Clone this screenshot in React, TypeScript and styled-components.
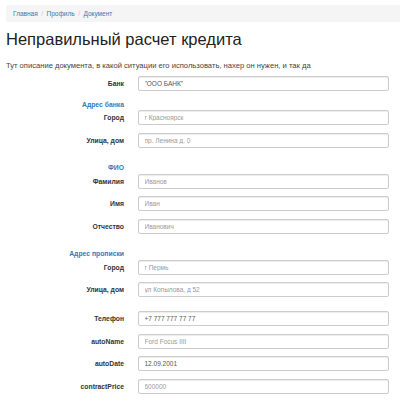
import React from "react";
import styled, { createGlobalStyle } from "styled-components";

const Global = createGlobalStyle`
  html, body { margin: 0; padding: 0; background: #fff; }
  body {
    font-family: "Liberation Sans", Arial, sans-serif;
    font-size: 7px;
    color: #333;
    overflow: hidden;
  }
`;

const Page = styled.div`
  padding: 5px 0 0 6px;
  width: 394px;
`;

const Breadcrumb = styled.ol`
  list-style: none;
  margin: 0;
  padding: 0 0 0 7px;
  height: 17px;
  display: flex;
  align-items: center;
  background: #f5f5f5;
  border-radius: 2px 0 0 2px;
  font-size: 6.5px;
`;

const Crumb = styled.li`
  color: #337ab7;
  & + &::before {
    content: "/";
    color: #ccc;
    padding: 0 3.5px;
  }
`;

const Title = styled.h1`
  margin: 8px 0 0;
  font-size: 16.5px;
  font-weight: normal;
  line-height: 18.7px;
  color: #222;
`;

const Lead = styled.p`
  margin: 12px 0 0;
  font-size: 7.6px;
  line-height: 9px;
  color: #444;
`;

const Form = styled.div`
  margin-top: 6px;
  display: flex;
  flex-direction: column;
`;

const Section = styled.div<{ $spaced?: boolean }>`
  display: flex;
  flex-direction: column;
  margin-bottom: ${(p) => (p.$spaced ? "6.5px" : "0")};
`;

const Heading = styled.div`
  display: grid;
  grid-template-columns: 118px;
  height: 12px;
  align-items: center;
  justify-items: end;
  color: #337ab7;
  font-weight: bold;
  font-size: 6.8px;
`;

const Row = styled.div`
  display: grid;
  grid-template-columns: 118px 251px;
  column-gap: 14px;
  align-items: center;
  margin-bottom: 7.5px;
`;

const Label = styled.label`
  text-align: right;
  font-weight: bold;
  font-size: 6.8px;
  color: #333;
`;

const Input = styled.input<{ $muted?: boolean }>`
  box-sizing: border-box;
  height: 15px;
  width: 100%;
  margin: 0;
  padding: 0 5.5px;
  border: 1px solid #ccc;
  border-radius: 2px;
  box-shadow: inset 0 1px 1px rgba(0, 0, 0, 0.075);
  font-family: "Liberation Sans", Arial, sans-serif;
  font-size: 6.5px;
  color: ${(p) => (p.$muted ? "#999" : "#555")};
  background: #fff;
  outline: none;
`;

type F = { label: string; value: string; muted?: boolean };

const FieldRow = ({ label, value, muted }: F) => (
  <Row>
    <Label>{label}</Label>
    <Input readOnly value={value} $muted={muted} />
  </Row>
);

export default function App() {
  return (
    <>
      <Global />
      <Page>
        <Breadcrumb>
          <Crumb>Главная</Crumb>
          <Crumb>Профиль</Crumb>
          <Crumb>Документ</Crumb>
        </Breadcrumb>
        <Title>Неправильный расчет кредита</Title>
        <Lead>
          Тут описание документа, в какой ситуации его использовать, нахер он нужен, и так да
        </Lead>
        <Form>
          <Section>
            <FieldRow label="Банк" value={'"ООО БАНК"'} />
          </Section>
          <Section $spaced>
            <Heading>Адрес банка</Heading>
            <FieldRow label="Город" value="г Красноярск" muted />
            <FieldRow label="Улица, дом" value="пр. Ленина д. 0" muted />
          </Section>
          <Section $spaced>
            <Heading>ФИО</Heading>
            <FieldRow label="Фамилия" value="Иванов" muted />
            <FieldRow label="Имя" value="Иван" muted />
            <FieldRow label="Отчество" value="Иванович" muted />
          </Section>
          <Section $spaced>
            <Heading>Адрес прописки</Heading>
            <FieldRow label="Город" value="г Пермь" muted />
            <FieldRow label="Улица, дом" value="ул Копылова, д 52" muted />
          </Section>
          <Section>
            <FieldRow label="Телефон" value="+7 777 777 77 77" />
            <FieldRow label="autoName" value="Ford Focus IIII" muted />
            <FieldRow label="autoDate" value="12.09.2001" />
            <FieldRow label="contractPrice" value="600000" muted />
            <FieldRow label="" value="" muted />
          </Section>
        </Form>
      </Page>
    </>
  );
}
